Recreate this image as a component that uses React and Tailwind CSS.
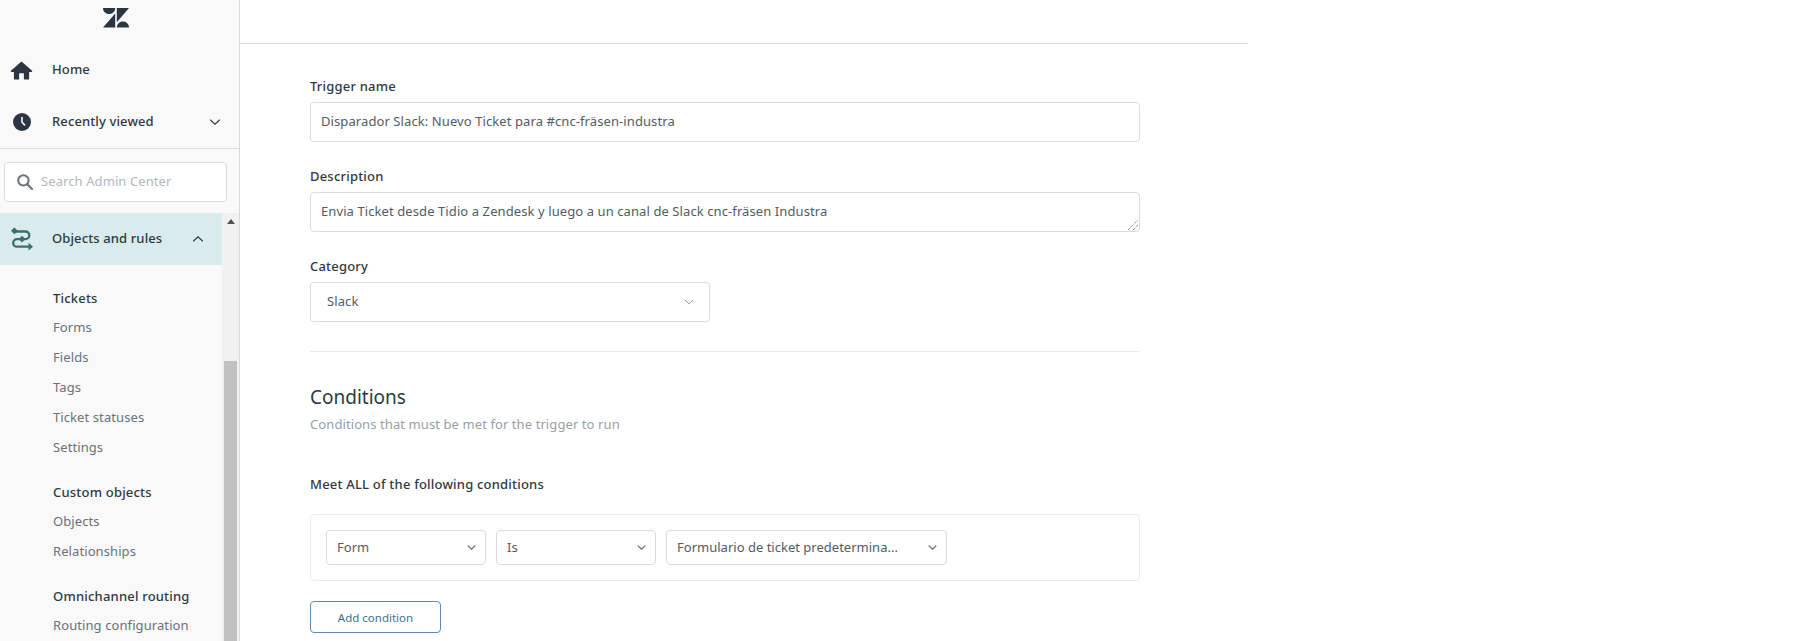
import React from "react";

const font = { fontFamily: '"Noto Sans", sans-serif' };

function Chevron({ className, up, sw = 1.1 }) {
  return (
    <svg viewBox="0 0 12 12" className={className} fill="none" stroke="currentColor" strokeWidth={sw} strokeLinecap="round">
      <path d={up ? "M1.5 8L6 3.8 10.5 8" : "M1.5 4L6 8.2 10.5 4"} />
    </svg>
  );
}

function Logo() {
  return (
    <svg viewBox="0 0 26 20" className="w-[26px] h-[20px]" fill="#2b3642">
      <path d="M0 0h12.2c0 3.4-2.7 6.1-6.1 6.1S0 3.4 0 0z" />
      <path d="M12.2 5.4V19.6H0z" />
      <path d="M13.8 19.6c0-3.4 2.7-6.1 6.1-6.1S26 16.2 26 19.6z" />
      <path d="M13.8 14.2V0H26z" />
    </svg>
  );
}

function Home() {
  return (
    <svg viewBox="0 0 24 20" className="w-[23px] h-[19px]" fill="#2b3642">
      <path d="M12 .5L23.5 10.6l-.9 1H20V19.5h-5.5V13h-5v6.5H4v-7.9H1.4l-.9-1z" />
    </svg>
  );
}

function Clock() {
  return (
    <svg viewBox="0 0 18 18" className="w-[18px] h-[18px]">
      <circle cx="9" cy="9" r="9" fill="#2b3642" />
      <path d="M9 4v5.2l3 3.2" fill="none" stroke="#f9f9f9" strokeWidth="1.6" />
    </svg>
  );
}

function Routes() {
  return (
    <svg viewBox="0 0 22 24" className="w-[22px] h-[24px]" fill="none" stroke="#37706f" strokeWidth="2.3">
      <path d="M3 4.5h11.5a3.8 3.8 0 0 1 0 7.6H6a3.8 3.8 0 0 0 0 7.6h12" />
      <path d="M3.4 .4L6.8 3.8 3.4 7.2 0 3.8z" fill="#37706f" stroke="none" />
      <path d="M11 8.7L14.4 12.1 11 15.5 7.6 12.1z" fill="#37706f" stroke="none" />
      <path d="M17.5 15.8l4.5 3.9-4.5 3.9z" fill="#37706f" stroke="none" />
    </svg>
  );
}

function Search() {
  return (
    <svg viewBox="0 0 16 16" className="w-[16px] h-[16px]" fill="none" stroke="#68737d" strokeWidth="2">
      <circle cx="6.4" cy="6.4" r="5.2" />
      <path d="M10.2 10.2L15.2 15.2" strokeLinecap="round" />
    </svg>
  );
}

function Section({ title, items, className }) {
  return (
    <div className={className}>
      <div className="h-[27px] pb-[2px] flex items-center text-[13px] font-medium tracking-[0.2px] text-[#2f3941]">{title}</div>
      {items.map((i) => (
        <div key={i} className="h-[30px] flex items-center text-[13px] tracking-[0.09px] text-[#68737d]">{i}</div>
      ))}
    </div>
  );
}

function Sel({ label, className }) {
  return (
    <div className={`h-[35px] border border-[#d8dcde] rounded-[4px] flex items-center justify-between pl-[10px] pr-[9px] text-[13px] tracking-[0.01px] text-[#525c64] ${className}`}>
      <span className="pt-[1px]">{label}</span>
      <Chevron sw={1.6} className="w-[9px] h-[9px] text-[#68737d]" />
    </div>
  );
}

function Label({ children }) {
  return <div className="h-[20px] flex items-center text-[13px] font-medium tracking-[0.2px] text-[#2f3941]">{children}</div>;
}

export default function App() {
  return (
    <div style={font} className="flex w-[1800px] h-[641px] overflow-hidden bg-white">
      <aside className="w-[240px] h-full shrink-0 bg-[#f9f9f9] border-r border-[#d8dcde] flex flex-col overflow-hidden">
        <div className="h-[38px] pt-[8px] pl-[103px] shrink-0"><Logo /></div>
        <div className="h-[52px] mt-[6px] flex items-center shrink-0 text-[13px] tracking-[0.12px] text-[#2f3941]">
          <div className="w-[52px] pl-[10px] flex"><Home /></div>
          <span className="font-medium">Home</span>
        </div>
        <div className="h-[53px] flex items-center shrink-0 text-[13px] tracking-[0.12px] text-[#2f3941] border-b border-[#d8dcde]">
          <div className="w-[52px] pl-[13px] flex"><Clock /></div>
          <span className="font-medium">Recently viewed</span>
          <Chevron className="w-[12px] h-[12px] ml-auto mr-[18px] text-[#2f3941]" />
        </div>
        <div className="px-[4px] pt-[13px] pb-[11px] shrink-0">
          <div className="h-[40px] w-[223px] bg-white border border-[#d8dcde] rounded-[4px] flex items-center pl-[12px] gap-[8px]">
            <Search />
            <span className="text-[13px] tracking-[0.09px] text-[#b0b8be]">Search Admin Center</span>
          </div>
        </div>
        <div className="flex flex-1 min-h-0">
          <div className="w-[222px] shrink-0">
            <div className="h-[52px] bg-[#d9ebed] flex items-center text-[13px] tracking-[0.12px] text-[#2f3941]">
              <div className="w-[52px] pl-[11px] flex"><Routes /></div>
              <span className="font-medium">Objects and rules</span>
              <Chevron up className="w-[12px] h-[12px] ml-auto mr-[18px]" />
            </div>
            <div className="pl-[53px] pt-[21px]">
              <Section title="Tickets" items={["Forms", "Fields", "Tags", "Ticket statuses", "Settings"]} />
              <Section title="Custom objects" className="mt-[17px]" items={["Objects", "Relationships"]} />
              <Section title="Omnichannel routing" className="mt-[17px]" items={["Routing configuration"]} />
            </div>
          </div>
          <div className="w-[17px] bg-[#f1f1f1] flex flex-col items-center shrink-0">
            <div className="w-0 h-0 mt-[6px] border-x-[4px] border-x-transparent border-b-[5px] border-b-[#505050]" />
            <div className="mt-[137px] w-[13px] flex-1 bg-[#c1c1c1]" />
          </div>
        </div>
      </aside>

      <main className="w-[1008px] shrink-0">
        <div className="h-[44px] border-b border-[#d8dcde]" />
        <div className="ml-[70px] pt-[33px] w-[830px]">
          <Label>Trigger name</Label>
          <div className="mt-[5px] h-[40px] border border-[#d8dcde] rounded-[4px] flex items-center px-[10px] text-[13px] tracking-[0.09px] text-[#525c64]">
            Disparador Slack: Nuevo Ticket para #cnc-fräsen-industra
          </div>
          <div className="mt-[25px]"><Label>Description</Label></div>
          <div className="relative mt-[5px] h-[40px] border border-[#d8dcde] rounded-[4px] flex items-center px-[10px] text-[13px] tracking-[0.09px] text-[#525c64]">
            Envia Ticket desde Tidio a Zendesk y luego a un canal de Slack cnc-fräsen Industra
            <svg viewBox="0 0 10 10" className="absolute right-[1px] bottom-[1px] w-[10px] h-[10px]" stroke="#666" strokeWidth="1" strokeDasharray="1 1">
              <path d="M0 10L10 0M5 10L10 5" />
            </svg>
          </div>
          <div className="mt-[25px]"><Label>Category</Label></div>
          <div className="mt-[5px] h-[40px] w-[400px] border border-[#d8dcde] rounded-[4px] flex items-center justify-between pl-[16px] pr-[15px] text-[13px] tracking-[0.09px] text-[#525c64]">
            <span>Slack</span>
            <Chevron className="w-[10px] h-[10px] text-[#87929d]" />
          </div>
          <div className="mt-[29px] border-t border-[#e9ebed]" />
          <div className="mt-[31px] h-[28px] flex items-center text-[19px] text-[#2f3941]">Conditions</div>
          <div className="mt-[2px] h-[24px] flex items-center text-[13px] tracking-[0.09px] text-[#979fa6]">Conditions that must be met for the trigger to run</div>
          <div className="mt-[36px] h-[24px] flex items-center text-[13px] font-medium tracking-[0.2px] text-[#2f3941]">Meet ALL of the following conditions</div>
          <div className="mt-[17px] h-[67px] border border-[#e9ebed] rounded-[4px] flex items-center pl-[15px] gap-[10px]">
            <Sel label="Form" className="w-[160px]" />
            <Sel label="Is" className="w-[160px]" />
            <Sel label="Formulario de ticket predetermina..." className="w-[281px]" />
          </div>
          <div className="mt-[20px] h-[32px] w-[131px] border border-[#5a8eb8] rounded-[4px] flex items-center justify-center pt-[1px] text-[11.5px] text-[#3f6f96]">
            Add condition
          </div>
        </div>
      </main>
    </div>
  );
}
